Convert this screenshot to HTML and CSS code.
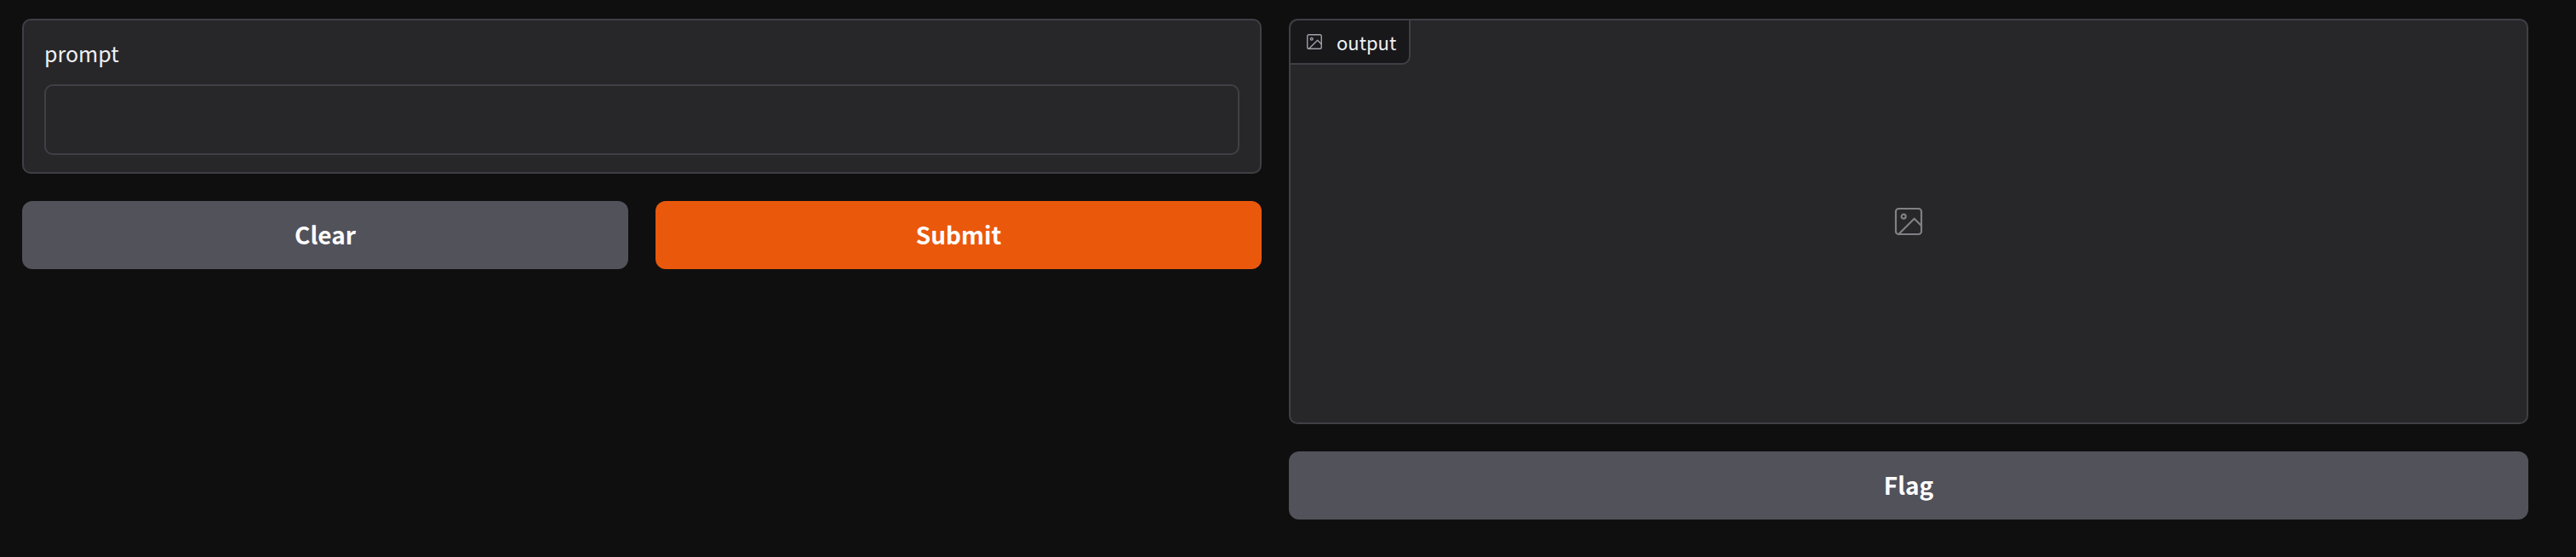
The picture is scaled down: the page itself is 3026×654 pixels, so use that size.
FILE: index.html
```html
<!DOCTYPE html>
<html lang="en">
<head>
  <meta charset="UTF-8" />
  <title>Gradio Interface</title>
  <link rel="stylesheet" href="styles.css">
</head>
<body>
  <div class="columns">
    <div class="column">
      <div class="panel">
        <label class="field-label" for="prompt">prompt</label>
        <textarea id="prompt" class="field-input"></textarea>
      </div>
      <div class="actions">
        <button class="btn">Clear</button>
        <button class="btn btn-primary">Submit</button>
      </div>
    </div>

    <div class="column">
      <div class="output">
        <div class="output-tab">
          <svg class="tab-icon" viewBox="0 0 24 24"><rect x="3" y="3" width="18" height="18" rx="2"></rect><circle cx="8.5" cy="8.5" r="1.5"></circle><polyline points="21 15 16 10 5 21"></polyline></svg>
          <span>output</span>
        </div>
        <svg class="empty-icon" viewBox="0 0 24 24"><rect x="3" y="3" width="18" height="18" rx="2"></rect><circle cx="8.5" cy="8.5" r="1.5"></circle><polyline points="21 15 16 10 5 21"></polyline></svg>
      </div>
      <button class="btn btn-wide">Flag</button>
    </div>
  </div>
</body>
</html>
```

FILE: styles.css
```css
body {
  margin: 0;
  padding: 22px 56px 0 26px;
  background-color: #0f0f0f;
  font-family: "Noto Sans CJK SC", "Noto Sans", sans-serif;
  color: #f0f0f2;
  overflow: hidden;
}

.columns {
  display: grid;
  grid-template-columns: 1fr 1fr;
  gap: 32px;
}

.column {
  display: flex;
  flex-direction: column;
  gap: 32px;
}

.panel {
  display: flex;
  flex-direction: column;
  box-sizing: border-box;
  height: 182px;
  padding: 18px 24px 20px;
  background-color: #27272a;
  border: 2px solid #3f3f46;
  border-radius: 10px;
}

.field-label {
  font-size: 25px;
  line-height: 40px;
  margin-bottom: 17px;
}

.field-input {
  flex: 1;
  display: block;
  padding: 0;
  resize: none;
  background-color: #27272a;
  border: 2px solid #3f3f46;
  border-radius: 10px;
  outline: none;
}

.actions {
  display: grid;
  grid-template-columns: 1fr 1fr;
  gap: 32px;
}

.btn {
  height: 80px;
  padding: 0 0 3px;
  border: none;
  border-radius: 12px;
  background-color: #52525b;
  color: #fff;
  font-family: inherit;
  font-size: 28px;
  font-weight: 700;
}

.btn-primary {
  background-color: #ea580c;
}

.btn-wide {
  width: 100%;
}

.output {
  position: relative;
  display: flex;
  align-items: center;
  justify-content: center;
  box-sizing: border-box;
  height: 476px;
  background-color: #27272a;
  border: 2px solid #3f3f46;
  border-radius: 10px;
}

.output-tab {
  position: absolute;
  top: 0;
  left: 0;
  display: flex;
  align-items: center;
  gap: 15px;
  box-sizing: border-box;
  height: 52px;
  padding: 0 15px 0 17px;
  background-color: #18181b;
  border-right: 2px solid #3f3f46;
  border-bottom: 2px solid #3f3f46;
  border-radius: 10px 0 10px 0;
  font-size: 22px;
}

.tab-icon,
.empty-icon {
  fill: none;
  stroke-linecap: round;
  stroke-linejoin: round;
}

.tab-icon {
  width: 22px;
  height: 22px;
  stroke: #a1a1aa;
  stroke-width: 1.5;
}

.empty-icon {
  width: 40px;
  height: 40px;
  stroke: #808085;
  stroke-width: 1.3;
}
```
